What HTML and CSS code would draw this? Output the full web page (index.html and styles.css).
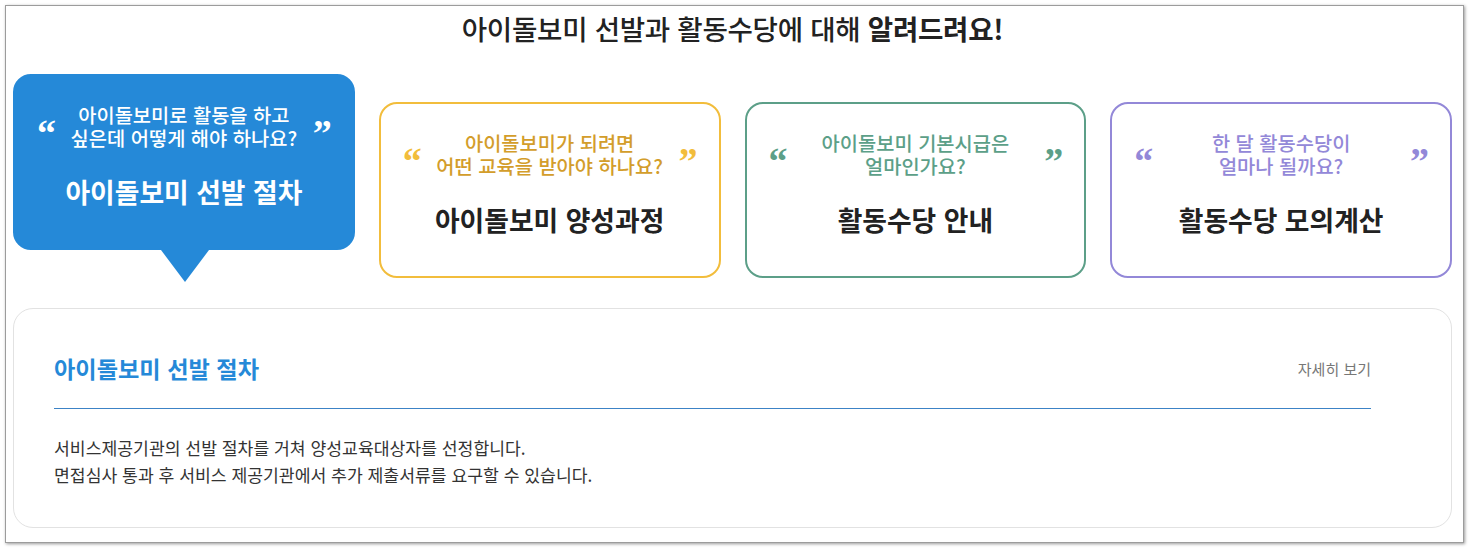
FILE: index.html
```html
<!DOCTYPE html>
<html lang="ko">
<head>
<meta charset="utf-8">
<title>아이돌보미 선발과 활동수당</title>
<link rel="stylesheet" href="styles.css">
</head>
<body>
<div class="frame">
  <h1 class="title">아이돌보미 선발과 활동수당에 대해 <strong>알려드려요!</strong></h1>
  <div class="cards">
    <div class="card card-active">
      <div class="ask">
        <span class="q">&ldquo;</span>
        <p class="sub">아이돌보미로 활동을 하고<br>싶은데 어떻게 해야 하나요?</p>
        <span class="q">&rdquo;</span>
      </div>
      <p class="name">아이돌보미 선발 절차</p>
    </div>
    <div class="card card-yellow">
      <div class="ask">
        <span class="q">&ldquo;</span>
        <p class="sub">아이돌보미가 되려면<br>어떤 교육을 받아야 하나요?</p>
        <span class="q">&rdquo;</span>
      </div>
      <p class="name">아이돌보미 양성과정</p>
    </div>
    <div class="card card-green">
      <div class="ask">
        <span class="q">&ldquo;</span>
        <p class="sub">아이돌보미 기본시급은<br>얼마인가요?</p>
        <span class="q">&rdquo;</span>
      </div>
      <p class="name">활동수당 안내</p>
    </div>
    <div class="card card-purple">
      <div class="ask">
        <span class="q">&ldquo;</span>
        <p class="sub">한 달 활동수당이<br>얼마나 될까요?</p>
        <span class="q">&rdquo;</span>
      </div>
      <p class="name">활동수당 모의계산</p>
    </div>
  </div>
  <div class="panel">
    <div class="panel-head">
      <h2 class="panel-title">아이돌보미 선발 절차</h2>
      <a class="more" href="#">자세히 보기</a>
    </div>
    <p class="panel-text">서비스제공기관의 선발 절차를 거쳐 양성교육대상자를 선정합니다.<br>면접심사 통과 후 서비스 제공기관에서 추가 제출서류를 요구할 수 있습니다.</p>
  </div>
</div>
</body>
</html>
```
FILE: styles.css
```css
* { box-sizing: border-box; }
html, body { margin: 0; padding: 0; background: #fff; }
body {
  font-family: "Noto Sans CJK KR", "Noto Sans", sans-serif;
  color: #222;
}
.frame {
  margin: 5px;
  height: 538px;
  border: 1px solid #9c9c9c;
  box-shadow: 1px 1px 3px rgba(0,0,0,0.4);
  padding: 0 11px 0 7px;
  background: #fff;
}
.title {
  margin: 0;
  height: 44px;
  line-height: 44px;
  text-align: center;
  font-size: 27.6px;
  font-weight: 500;
  color: #222;
  letter-spacing: -0.3px;
}
.title strong { font-weight: 700; }
.cards {
  margin-top: 24px;
  display: grid;
  grid-template-columns: repeat(4, 1fr);
  column-gap: 24px;
  height: 204px;
}
.card {
  height: 176px;
  border: 2px solid #ccc;
  border-radius: 18px;
  padding: 26px 22px 0;
  margin-top: 28px;
  text-align: center;
}
.card-active {
  position: relative;
  margin-top: 0;
  background: #2589d8;
  border-color: #2589d8;
  color: #fff;
}
.card-active::after {
  content: "";
  position: absolute;
  left: 146px;
  top: 174px;
  border-left: 24px solid transparent;
  border-right: 24px solid transparent;
  border-top: 32px solid #2589d8;
}
.ask {
  display: flex;
  align-items: center;
  justify-content: space-between;
  height: 48px;
}
.q {
  font-family: "Liberation Serif", serif;
  font-weight: 700;
  font-size: 38px;
  line-height: 20px;
  height: 20px;
  padding-top: 7px;
  width: 18px;
  overflow: visible;
}
.sub {
  margin: 0;
  flex: 1;
  font-size: 19.8px;
  line-height: 23.5px;
  font-weight: 500;
  white-space: nowrap;
}
.name {
  margin: 24px 0 0;
  font-size: 26.8px;
  line-height: 36px;
  font-weight: 700;
  color: #222;
}
.card-active .name { color: #fff; }
.card-yellow { border-color: #f2bd3c; }
.card-yellow .sub { color: #d39d2b; }
.card-yellow .q { color: #f2bd3c; }
.card-green { border-color: #5c9f88; }
.card-green .sub, .card-green .q { color: #5c9f88; }
.card-purple { border-color: #9388d8; }
.card-purple .sub, .card-purple .q { color: #9388d8; }
.panel {
  margin-top: 30px;
  height: 220px;
  border: 1px solid #e2e2e2;
  border-radius: 20px;
  padding: 44px 80px 0 40px;
}
.panel-head {
  display: flex;
  align-items: center;
  justify-content: space-between;
  padding-bottom: 25px;
  border-bottom: 1px solid #3c83c6;
  box-sizing: content-box;
  height: 30px;
}
.panel-title {
  margin: 0;
  font-size: 23.2px;
  line-height: 30px;
  font-weight: 700;
  color: #2589d8;
}
.more {
  font-size: 15px;
  color: #777;
  text-decoration: none;
}
.panel-text {
  margin: 25px 0 0;
  font-size: 17.2px;
  line-height: 27px;
  color: #333;
}
```
